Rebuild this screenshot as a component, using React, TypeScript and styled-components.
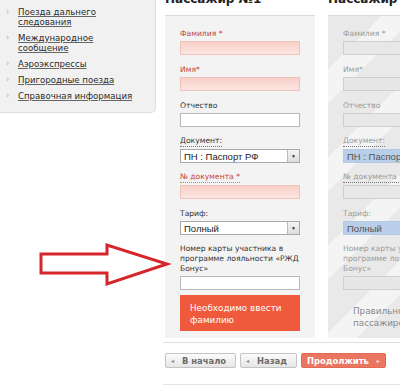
import React from 'react';
import styled, { createGlobalStyle, css } from 'styled-components';

const GlobalStyle = createGlobalStyle`
  html, body {
    margin: 0;
    padding: 0;
    background: #fff;
    overflow: hidden;
  }
  body {
    font-family: "DejaVu Sans", Verdana, sans-serif;
    color: #333;
  }
`;

const menu: string[][] = [
  ['Поезда дальнего', 'следования'],
  ['Международное', 'сообщение'],
  ['Аэроэкспрессы'],
  ['Пригородные поезда'],
  ['Справочная информация'],
];

type Field = {
  key: string;
  lines: string[];
  kind: 'input' | 'select';
  required?: boolean;
  value?: string;
  dotted?: boolean;
};

const fields: Field[] = [
  { key: 'surname', lines: ['Фамилия *'], kind: 'input', required: true },
  { key: 'name', lines: ['Имя*'], kind: 'input', required: true },
  { key: 'patronymic', lines: ['Отчество'], kind: 'input' },
  { key: 'doc', lines: ['Документ:'], kind: 'select', value: 'ПН : Паспорт РФ', dotted: true },
  { key: 'docnum', lines: ['№ документа *'], kind: 'input', required: true, dotted: true },
  { key: 'tariff', lines: ['Тариф:'], kind: 'select', value: 'Полный' },
  {
    key: 'bonus',
    lines: ['Номер карты участника в', 'программе лояльности «РЖД', 'Бонус»'],
    kind: 'input',
  },
];

const withBreaks = (lines: string[]) =>
  lines.map((l, i) => (
    <React.Fragment key={i}>
      {i > 0 && <br />}
      {l}
    </React.Fragment>
  ));

export default function App() {
  return (
    <>
      <GlobalStyle />
      <Page>
        <Sidebar>
          {menu.map(item => (
            <MenuItem key={item[0]}>
              <Bullet>›</Bullet>
              <MenuLink>{withBreaks(item)}</MenuLink>
            </MenuItem>
          ))}
        </Sidebar>
        <Main>
          <Columns>
            <Passenger title="Пассажир №1" />
            <Passenger title="Пассажир №2" disabled />
          </Columns>
          <ButtonBar>
            <NavButton><Tri>◂</Tri>В начало</NavButton>
            <NavButton><Tri>◂</Tri>Назад</NavButton>
            <NavButton primary>Продолжить<Tri>▸</Tri></NavButton>
          </ButtonBar>
        </Main>
        <Arrow viewBox="0 0 134 46" width="134" height="46">
          <polygon
            points="3,12 69,12 69,3 129,22 69,42 69,31 3,31"
            fill="none"
            stroke="#d7262b"
            strokeWidth="3"
            strokeLinejoin="miter"
          />
        </Arrow>
      </Page>
    </>
  );
}

const Passenger = ({ title, disabled }: { title: string; disabled?: boolean }) => (
  <Column>
    <Title>{title}</Title>
    <Panel disabled={disabled}>
      {fields.map(f => (
        <FieldRow key={f.key}>
          <Label
            required={f.required && !disabled}
            dotted={f.dotted}
            disabled={disabled}
            multi={f.lines.length > 1}
          >
            {withBreaks(f.lines)}
          </Label>
          {f.kind === 'select' ? (
            <Select disabled={disabled}>
              <span>{f.value}</span>
              {!disabled && <SelectBtn>▼</SelectBtn>}
            </Select>
          ) : (
            <Input required={f.required && !disabled} disabled={disabled} />
          )}
        </FieldRow>
      ))}
      {disabled ? (
        <Hint>Правильно заполните<br />пассажиров</Hint>
      ) : (
        <ErrorBox>Необходимо ввести<br />фамилию</ErrorBox>
      )}
    </Panel>
  </Column>
);

const Page = styled.div`
  position: relative;
  display: flex;
  width: 400px;
  height: 391px;
  overflow: hidden;
`;

const Sidebar = styled.ul`
  flex: none;
  width: 156px;
  height: 113px;
  box-sizing: border-box;
  margin: 0 9px 0 0;
  padding: 7px 8px 0 6px;
  list-style: none;
  background: #f1f1f1;
  border: 1px solid #dedede;
  border-top: none;
  border-left: none;
  border-bottom-right-radius: 5px;
`;

const MenuItem = styled.li`
  display: flex;
  gap: 7px;
  margin-bottom: 6px;
  font-size: 8.6px;
  line-height: 10px;
`;

const Bullet = styled.span`
  color: #b0b0b0;
  font-size: 8px;
  width: 5px;
`;

const MenuLink = styled.a`
  color: #2a2a2a;
  text-decoration: underline;
  text-decoration-color: #666;
`;

const Main = styled.div`
  display: flex;
  flex-direction: column;
  flex: none;
  width: 240px;
`;

const Columns = styled.div`
  display: flex;
  gap: 13px;
`;

const Column = styled.div`
  flex: none;
  width: 150px;
`;

const Title = styled.div`
  margin-top: -8px;
  height: 23px;
  font-size: 12px;
  line-height: 14px;
  font-weight: bold;
  color: #222;
  white-space: nowrap;
`;

const Panel = styled.div<{ disabled?: boolean }>`
  box-sizing: border-box;
  height: 323px;
  padding: 12px 15px 8px;
  border-top: 1px solid #dcdcdc;
  background: #f3f3f3;
  ${p => p.disabled && css`
    background: repeating-linear-gradient(
      135deg,
      #e9e9e9 0px,
      #e9e9e9 38px,
      #f4f4f4 38px,
      #f4f4f4 62px
    );
  `}
`;

const FieldRow = styled.div`
  display: flex;
  flex-direction: column;
  gap: 2px;
  margin-bottom: 9px;
`;

const Label = styled.span<{ required?: boolean; dotted?: boolean; disabled?: boolean; multi?: boolean }>`
  font-size: 7.6px;
  line-height: ${p => (p.multi ? 10 : 11)}px;
  white-space: nowrap;
  color: ${p => (p.disabled ? '#9a9a9a' : p.required ? '#c4453a' : '#333')};
  ${p => p.dotted && css`
    align-self: flex-start;
    border-bottom: 1px dotted ${p.required ? '#d08078' : '#777'};
    line-height: 10px;
  `}
`;

const Input = styled.div<{ required?: boolean; disabled?: boolean }>`
  box-sizing: border-box;
  height: 14px;
  border: 1px solid #b9b9b9;
  background: #fff;
  ${p => p.required && css`
    border-color: #ecc2bb;
    background: linear-gradient(#f8cfc8, #fde6e2);
  `}
  ${p => p.disabled && css`
    border-color: #cfcfcf;
    background: #e7e7e7;
  `}
`;

const Select = styled.div<{ disabled?: boolean }>`
  box-sizing: border-box;
  display: flex;
  align-items: center;
  justify-content: space-between;
  height: 14px;
  padding-left: 3px;
  border: 1px solid #a9a9a9;
  background: #fff;
  font-family: "Liberation Sans", Arial, sans-serif;
  font-size: 9.5px;
  color: #222;
  white-space: nowrap;
  overflow: hidden;
  ${p => p.disabled && css`
    border-color: #b6c9e2;
    background: #b9cee8;
    color: #555;
  `}
`;

const SelectBtn = styled.span`
  box-sizing: border-box;
  width: 12px;
  height: 12px;
  display: flex;
  align-items: center;
  justify-content: center;
  border-left: 1px solid #bbb;
  background: linear-gradient(#f4f4f4, #dcdcdc);
  font-size: 5px;
  color: #333;
`;

const ErrorBox = styled.div`
  margin-top: -4px;
  height: 36px;
  box-sizing: border-box;
  padding: 7px 10px;
  background: #ef5a3d;
  color: #fff;
  font-size: 8.8px;
  line-height: 12px;
`;

const Hint = styled.div`
  margin-top: -4px;
  padding: 10px 0 0 10px;
  color: #888;
  font-size: 8.8px;
  line-height: 12px;
  white-space: nowrap;
`;

const ButtonBar = styled.div`
  display: flex;
  gap: 4px;
  margin: 4px 0 0 -2px;
  width: 240px;
  padding: 10px 2px 16px;
  border-top: 1px solid #dedede;
  border-bottom: 1px solid #e4e4e4;
`;

const NavButton = styled.button<{ primary?: boolean }>`
  display: flex;
  align-items: center;
  gap: 8px;
  height: 15px;
  padding: 0 9px 0 5px;
  border: 1px solid #c4c4c4;
  border-radius: 2px;
  background: linear-gradient(#fbfbfb, #e6e6e6);
  font-family: "DejaVu Sans", Verdana, sans-serif;
  font-size: 8.4px;
  font-weight: bold;
  color: #6a6a6a;
  white-space: nowrap;
  ${p => p.primary && css`
    padding: 0 5px 0 5px;
    border-color: #e06a55;
    background: #ea7560;
    color: #fff;
  `}
`;

const Tri = styled.span`
  font-size: 6px;
  font-weight: normal;
  opacity: 0.8;
`;

const Arrow = styled.svg`
  position: absolute;
  left: 38px;
  top: 242px;
  pointer-events: none;
`;
